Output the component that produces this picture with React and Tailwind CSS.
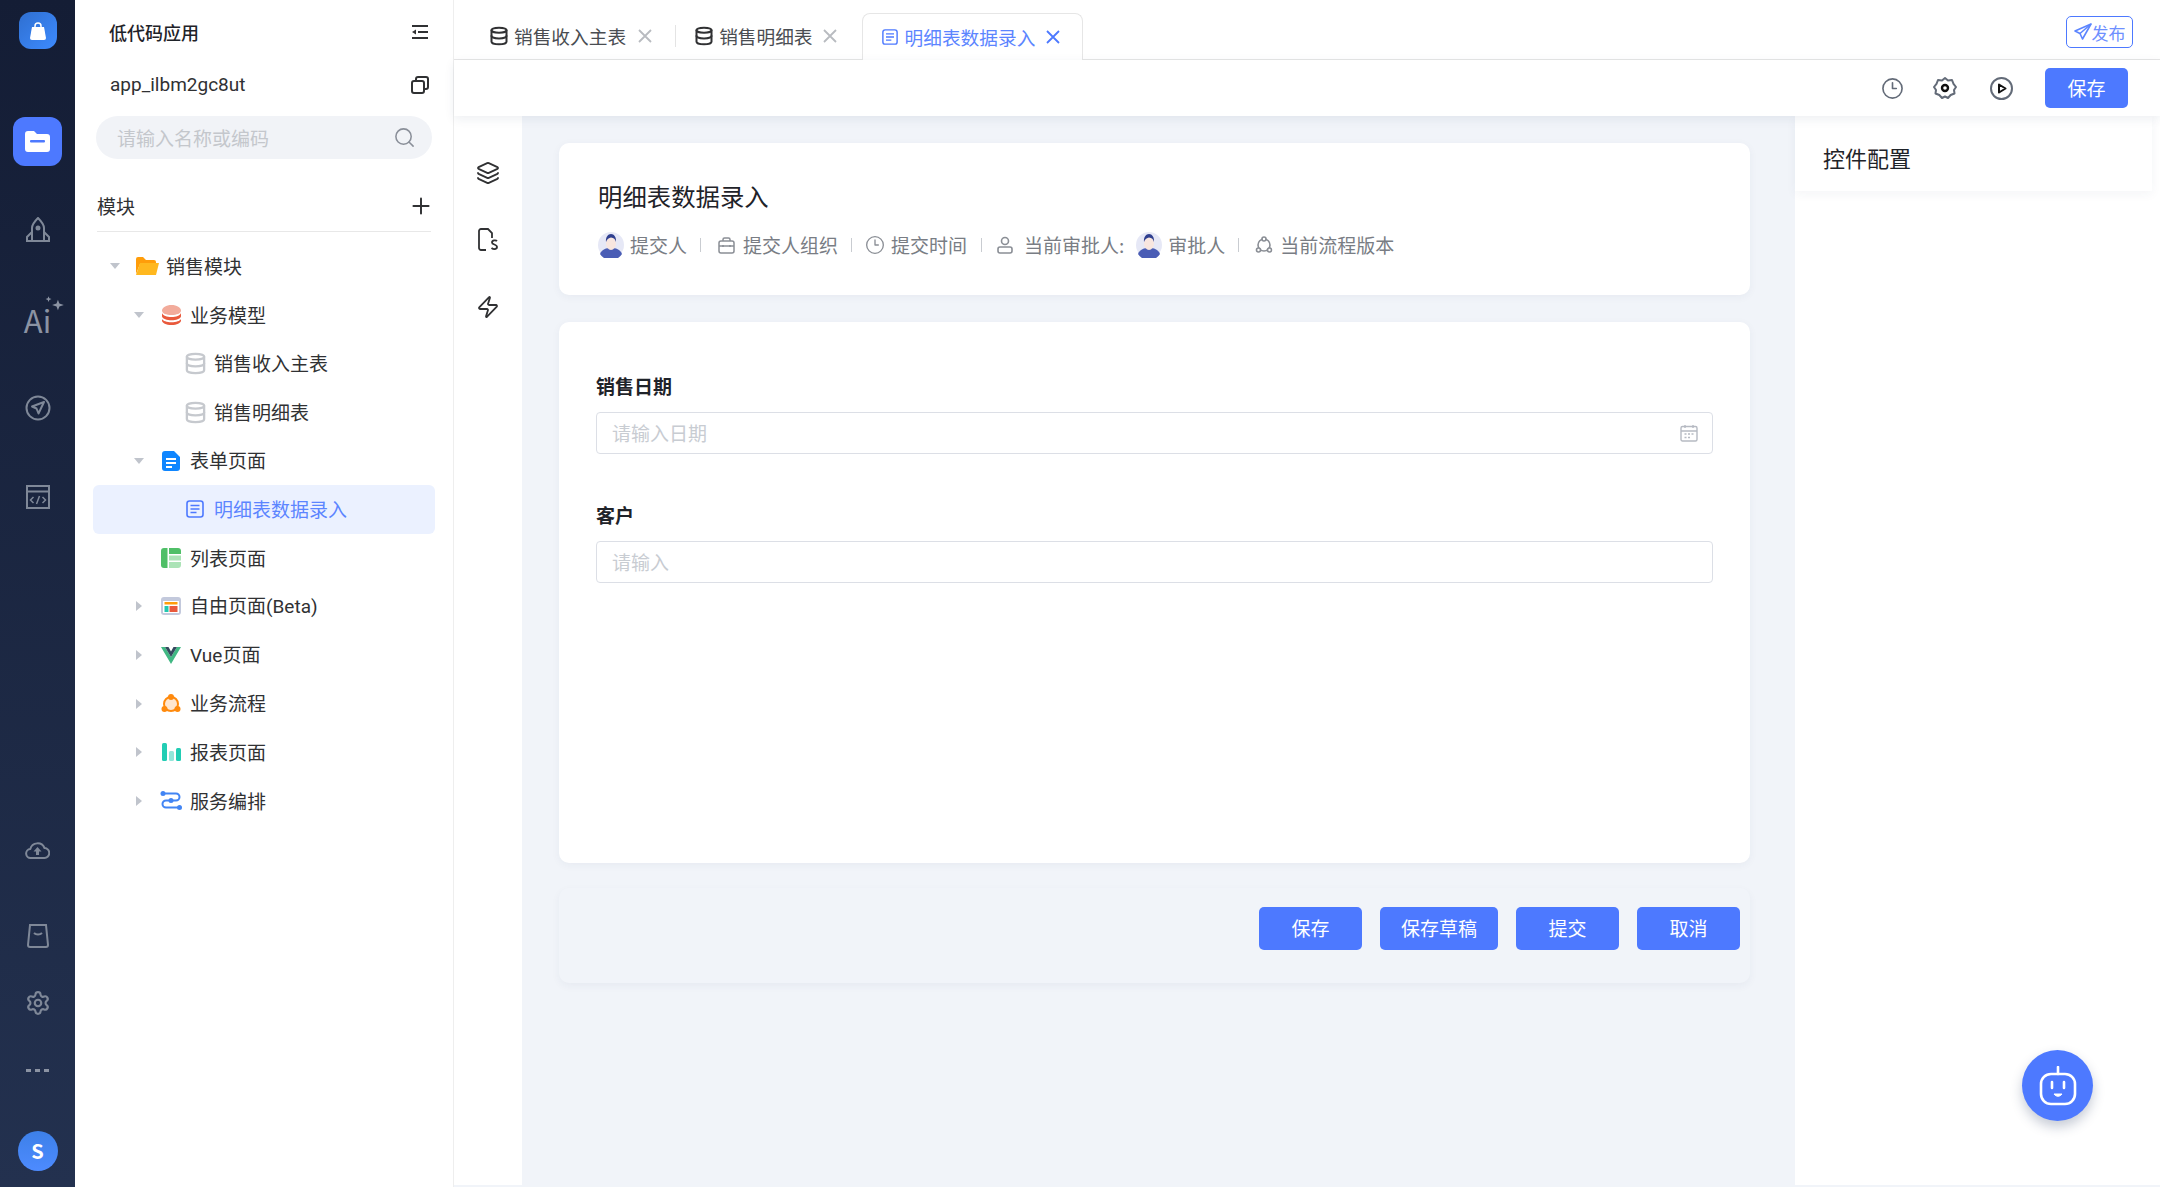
import React from "react";
import { Clock3, Database, Layers, Plus, Search, Settings, Zap } from "lucide-react";

const FONT = "font-['Noto_Sans_CJK_SC','Noto_Sans',sans-serif]";

const Caret = ({ dir }) => {
  if (dir === "down") {
    return (
      <svg width="14" height="10" viewBox="0 0 14 10">
        <path d="M2 2h10l-5 6z" fill="#c0c4cc" />
      </svg>
    );
  }
  if (dir === "right") {
    return (
      <svg width="10" height="14" viewBox="0 0 10 14">
        <path d="M2 2v10l6-5z" fill="#c0c4cc" />
      </svg>
    );
  }
  return null;
};

const DocOutline = ({ size = 18 }) => (
  <svg width={size} height={size} viewBox="0 0 18 18" fill="none" stroke="#4d79ff" strokeWidth="1.6">
    <rect x="1" y="1" width="16" height="16" rx="2.5" />
    <path d="M4.5 5.5h9M4.5 9h9M4.5 12.5h6" />
  </svg>
);

const FolderIcon = () => (
  <svg width="23" height="18" viewBox="0 0 23 18">
    <path d="M0 2a2 2 0 0 1 2-2h5l3 3h8a2 2 0 0 1 2 2v2H4L0 17z" fill="#ff9d0a" />
    <path d="M4 6h19l-3 12H0z" fill="#ffb81f" />
  </svg>
);

const ModelIcon = () => (
  <svg width="19" height="20" viewBox="0 0 19 20">
    <path d="M0 5.5C0 2.5 4.2 0 9.5 0S19 2.5 19 5.5 14.8 10 9.5 10 0 8.5 0 5.5z" fill="#f2ab9b" />
    <path d="M0 8c1 2.6 4.800 4 9.5 4S18 10.6 19 8v3.5c-1 2.5-4.800 3.800-9.500 3.800S1 14 0 11.500z" fill="#e9593c" />
    <path d="M0 14c1 2 4.800 3.200 9.500 3.200S18 16 19 14v1.500c0 2.500-4.200 4.500-9.500 4.500S0 18 0 15.500z" fill="#e9593c" />
  </svg>
);

const FormIcon = () => (
  <svg width="18" height="20" viewBox="0 0 18 20">
    <path d="M3 0h9l6 6v11a3 3 0 0 1-3 3H3a3 3 0 0 1-3-3V3a3 3 0 0 1 3-3z" fill="#0f86ff" />
    <path d="M4 7h10v2H4zM4 11h10v2H4zM4 15h6v2H4z" fill="#fff" />
  </svg>
);

const ListIcon = () => (
  <svg width="20" height="20" viewBox="0 0 20 20">
    <path d="M3 0h3.500v20H3a3 3 0 0 1-3-3V3a3 3 0 0 1 3-3z" fill="#4fbf67" />
    <path d="M8 0h9a3 3 0 0 1 3 3v3H8z" fill="#4fbf67" />
    <path d="M8 7.500h12v5H8zM8 14h12v3a3 3 0 0 1-3 3H8z" fill="#abe3b6" />
  </svg>
);

const FreeIcon = () => (
  <svg width="20" height="18" viewBox="0 0 20 18">
    <rect width="20" height="18" rx="3" fill="#c3c9dc" />
    <rect x="2" y="4" width="16" height="12" fill="#fff" />
    <rect x="3.500" y="5" width="13" height="2.500" fill="#ff9d0a" />
    <rect x="3.500" y="9" width="4" height="6" fill="#22c7b0" />
    <rect x="8.500" y="9" width="8" height="6" fill="#e9593c" />
  </svg>
);

const VueIcon = () => (
  <svg width="20" height="17" viewBox="0 0 20 17">
    <path d="M0 0h4l6 10 6-10h4L10 17z" fill="#41b883" />
    <path d="M4 0h3.500L10 4.500 12.500 0H16l-6 10z" fill="#35495e" />
  </svg>
);

const FlowIcon = () => (
  <svg width="20" height="20" viewBox="0 0 20 20">
    <circle cx="10" cy="10" r="7" fill="#ffe6cf" stroke="#ff8a0d" strokeWidth="2" />
    <circle cx="10" cy="3" r="3" fill="#ff8a0d" />
    <circle cx="3.500" cy="15" r="3" fill="#ff8a0d" />
    <circle cx="16.500" cy="15" r="3" fill="#ff8a0d" />
  </svg>
);

const ReportIcon = () => (
  <svg width="19" height="18" viewBox="0 0 19 18">
    <rect width="5" height="18" rx="1.500" fill="#22cdb4" />
    <rect x="7" y="8" width="5" height="10" rx="1.500" fill="#93e6d9" />
    <rect x="14" y="5" width="5" height="13" rx="1.500" fill="#22cdb4" />
  </svg>
);

const ServiceIcon = () => (
  <svg width="22" height="20" viewBox="0 0 22 20" fill="none" stroke="#4285f4" strokeWidth="2">
    <path d="M2 2.500h14a3.500 3.500 0 0 1 0 7H6a3.500 3.500 0 0 0 0 7h14" />
    <circle cx="3" cy="2.500" r="2.500" fill="#4285f4" stroke="none" />
    <circle cx="11" cy="9.500" r="2.500" fill="#4285f4" stroke="none" />
    <circle cx="19.500" cy="16.500" r="2.500" fill="#4285f4" stroke="none" />
  </svg>
);

const PersonAvatar = () => (
  <svg width="26" height="26" viewBox="0 0 26 26">
    <circle cx="13" cy="13" r="13" fill="#e6e8f6" />
    <path d="M2 22c2-5 6-6 11-6s9 1 11 6a13 13 0 0 1-22 0z" fill="#4a5db5" />
    <ellipse cx="13" cy="11" rx="5" ry="7" fill="#f8e6df" />
    <path d="M8 10c-.5-5 2-8 5-8s5.500 3 5 8c-1-3-2-4-5-4.500C11 6 9 7 8 10z" fill="#2f3f8f" />
  </svg>
);

const TableIcon = () => <Database size={23} color="#c6c9ce" strokeWidth={2.4} />;

const treeRows = [
  { level: 0, caret: "down", icon: <FolderIcon />, label: "销售模块" },
  { level: 1, caret: "down", icon: <ModelIcon />, label: "业务模型" },
  { level: 2, icon: <TableIcon />, label: "销售收入主表" },
  { level: 2, icon: <TableIcon />, label: "销售明细表" },
  { level: 1, caret: "down", icon: <FormIcon />, label: "表单页面" },
  { level: 2, icon: <DocOutline />, label: "明细表数据录入", active: true },
  { level: 1, icon: <ListIcon />, label: "列表页面" },
  { level: 1, caret: "right", icon: <FreeIcon />, label: "自由页面(Beta)", latin: true },
  { level: 1, caret: "right", icon: <VueIcon />, label: "Vue页面", latin: true },
  { level: 1, caret: "right", icon: <FlowIcon />, label: "业务流程" },
  { level: 1, caret: "right", icon: <ReportIcon />, label: "报表页面" },
  { level: 1, caret: "right", icon: <ServiceIcon />, label: "服务编排" },
];

const levelPadding = ["pl-[12px]", "pl-[36px]", "pl-[60px]"];

const railIcon = "#7f8898";

const Rail = () => (
  <aside className="flex h-full w-[75px] shrink-0 flex-col items-center bg-gradient-to-b from-[#141d35] to-[#23314f]">
    <div className="mt-[12px] flex h-[37px] w-[38px] items-center justify-center rounded-[12px] bg-gradient-to-br from-[#2f6fd0] to-[#3d8bff]">
      <svg width="16" height="18" viewBox="0 0 16 18">
        <path d="M2 5h12l2 11a2 2 0 0 1-2 2H2a2 2 0 0 1-2-2z" fill="#fff" />
        <path d="M5 6V4a3 3 0 0 1 6 0v2" fill="none" stroke="#fff" strokeWidth="1.500" />
      </svg>
    </div>
    <div className="mt-[48px] flex h-[88px] w-full items-center justify-center">
      <div className="flex h-[49px] w-[49px] items-center justify-center rounded-[12px] bg-[#4d79ff]">
        <svg width="25" height="21" viewBox="0 0 25 21">
          <path d="M0 3a3 3 0 0 1 3-3h6l3 3h10a3 3 0 0 1 3 3v12a3 3 0 0 1-3 3H3a3 3 0 0 1-3-3z" fill="#fff" />
          <rect x="5" y="9" width="15" height="2.500" rx="1" fill="#4d79ff" />
        </svg>
      </div>
    </div>
    <div className="flex h-[90px] items-center justify-center">
      <svg width="26" height="26" viewBox="0 0 26 26" fill="none" stroke={railIcon} strokeWidth="2">
        <path d="M7 24V11c0-4 3-7 6-10 3 3 6 6 6 10v13" />
        <path d="M7 15l-5 5v4h22v-4l-5-5M10 24h6" />
        <circle cx="13" cy="11" r="1.500" fill={railIcon} />
      </svg>
    </div>
    <div className="flex h-[89px] items-center justify-center">
      <span className="relative text-[31px] leading-none text-[#8b93a3]">
        Ai
        <svg width="20" height="18" viewBox="0 0 17 15" className="absolute -top-[8px] -right-[14px]" fill="#8b93a3">
          <path d="M11 3l1.200 3.300L16 7.500l-3.800 1.200L11 12 9.800 8.700 6 7.500l3.800-1.200z" />
          <path d="M3 0l.7 1.800L5.500 2.500l-1.800.7L3 5l-.7-1.800L.5 2.500l1.800-.7z" />
        </svg>
      </span>
    </div>
    <div className="flex h-[88px] items-center justify-center">
      <svg width="26" height="26" viewBox="0 0 26 26" fill="none" stroke={railIcon} strokeWidth="2">
        <circle cx="13" cy="13" r="11.500" />
        <path d="M19 7l-12 4.500 4.500 2 2 5z" strokeLinejoin="round" />
      </svg>
    </div>
    <div className="flex h-[89px] items-center justify-center">
      <svg width="24" height="24" viewBox="0 0 24 24" fill="none" stroke={railIcon} strokeWidth="2">
        <rect x="1" y="1" width="22" height="22" />
        <path d="M1 6.500h22" />
        <path d="M7.500 12l-3 3 3 3M16.500 12l3 3-3 3M13.500 11l-3 8" strokeWidth="1.500" />
      </svg>
    </div>
    <div className="mt-auto flex flex-col items-center pb-[16px]">
      <svg width="25" height="17" viewBox="0 0 25 17" fill="none" stroke={railIcon} strokeWidth="2" className="mb-[65px]">
        <path d="M6 16a4.500 4.500 0 0 1-.7-9A7.500 7.500 0 0 1 19.500 6 5 5 0 0 1 19 16z" strokeLinejoin="round" />
        <path d="M12.500 5l4 4.500h-2.500V13h-3V9.500H8.500z" fill={railIcon} stroke="none" />
      </svg>
      <svg width="22" height="24" viewBox="0 0 22 24" fill="none" stroke={railIcon} strokeWidth="2" className="mb-[42px]">
        <path d="M3 1h16l2 20a2 2 0 0 1-2 2H3a2 2 0 0 1-2-2z" />
        <path d="M7 9c2 2 6 2 8 0" />
      </svg>
      <Settings size={26} color={railIcon} className="mb-[53px]" />
      <div className="mb-[58px] flex h-[4px] gap-[4px]">
        <span className="h-[3px] w-[5px] bg-[#8b93a3]" />
        <span className="h-[3px] w-[5px] bg-[#8b93a3]" />
        <span className="h-[3px] w-[5px] bg-[#8b93a3]" />
      </div>
      <div className="flex h-[40px] w-[40px] items-center justify-center rounded-full bg-gradient-to-b from-[#3d80e8] to-[#4d8bff] text-[20px] font-bold text-white">
        S
      </div>
    </div>
  </aside>
);

const Sidebar = () => (
  <aside className="h-full w-[379px] shrink-0 border-r border-[#eeeeee] bg-white pt-[17px]">
    <div className="flex h-[30px] items-center justify-between pr-[24px] pl-[34px]">
      <span className="text-[18px] font-medium text-[#1f2329]">低代码应用</span>
      <svg width="18" height="14" viewBox="0 0 18 14" fill="none" stroke="#303133" strokeWidth="2">
        <path d="M1 1h16M7 7h10M1 13h16" />
        <path d="M5 4.500L1 7l4 2.500z" fill="#303133" stroke="none" />
      </svg>
    </div>
    <div className="mt-[23px] flex h-[30px] items-center justify-between pr-[24px] pl-[35px]">
      <span className="font-['Roboto',sans-serif] text-[19px] text-[#303133]">app_ilbm2gc8ut</span>
      <svg width="18" height="18" viewBox="0 0 18 18" fill="none" stroke="#303133" strokeWidth="2">
        <rect x="1" y="5" width="12" height="12" rx="2" />
        <path d="M5 5V3a2 2 0 0 1 2-2h8a2 2 0 0 1 2 2v8a2 2 0 0 1-2 2h-2" />
      </svg>
    </div>
    <div className="mt-[16px] ml-[21px] flex h-[43px] w-[336px] items-center justify-between rounded-full bg-[#f1f3f7] pr-[16px] pl-[21px]">
      <span className="pt-[2px] text-[19px] text-[#c4c7cc]">请输入名称或编码</span>
      <Search size={23} color="#8a8f99" strokeWidth={1.6} />
    </div>
    <div className="mt-[26px] ml-[22px] flex h-[47px] w-[334px] items-center justify-between border-b border-[#e8e8e8] pb-[4px]">
      <span className="text-[19px] text-[#303133]">模块</span>
      <Plus size={26} color="#303133" strokeWidth={1.8} className="mr-[-3px]" />
    </div>
    <div className="mt-[10px] ml-[18px] w-[342px]">
      {treeRows.map((row) => (
        <div
          key={row.label}
          className={`flex h-[48.600px] items-center rounded-[6px] ${levelPadding[row.level]} ${
            row.active ? "bg-[#ebf1ff] text-[#5c85ff]" : "text-[#303133]"
          }`}
        >
          <span className="mr-[10px] flex w-[20px] justify-center">
            <Caret dir={row.caret} />
          </span>
          <span className="mr-[7px] flex w-[24px] justify-center">{row.icon}</span>
          <span
            className={
              row.latin
                ? "pt-[2px] font-['Roboto','Noto_Sans_CJK_SC',sans-serif] text-[19px]"
                : "text-[19px]"
            }
          >
            {row.label}
          </span>
        </div>
      ))}
    </div>
  </aside>
);

const CloseX = ({ color }) => (
  <svg width="14" height="14" viewBox="0 0 14 14" fill="none" stroke={color} strokeWidth="1.800">
    <path d="M1 1l12 12M13 1L1 13" />
  </svg>
);

const TabBar = () => (
  <div className="flex h-[60px] items-end justify-between border-b border-[#e6e6e6] bg-white pl-[35px]">
    <div className="flex h-[47px] items-center">
      <span className="flex items-center pt-[2px]">
        <Database size={20} color="#303133" strokeWidth={2.400} />
        <span className="ml-[5px] text-[18.700px] text-[#4a4d52]">销售收入主表</span>
        <span className="ml-[12px]"><CloseX color="#b8bbc0" /></span>
      </span>
      <span className="mr-[18px] ml-[23px] h-[22px] w-px bg-[#e4e4e4]" />
      <span className="flex items-center pt-[2px]">
        <Database size={20} color="#303133" strokeWidth={2.400} />
        <span className="ml-[5px] text-[18.700px] text-[#4a4d52]">销售明细表</span>
        <span className="ml-[10px]"><CloseX color="#b8bbc0" /></span>
      </span>
      <div className="relative top-[1px] ml-[25px] flex h-[48px] w-[221px] items-center rounded-t-[8px] border border-b-0 border-[#e6e6e6] bg-white pl-[19px]">
        <DocOutline size={16} />
        <span className="ml-[7px] text-[18.700px] text-[#5c85ff]">明细表数据录入</span>
        <span className="ml-[11px]"><CloseX color="#4d79ff" /></span>
      </div>
    </div>
    <div className="mr-[27px] mb-[11px] flex h-[32px] w-[67px] items-center justify-center rounded-[5px] border border-[#4d79ff] text-[17px] text-[#6e8fff]">
      <svg width="18" height="18" viewBox="0 0 18 18" fill="none" stroke="#5c85ff" strokeWidth="1.600" strokeLinejoin="round">
        <path d="M17 1L1 8l5 2.500L8.500 16z" />
        <path d="M17 1L6 10.500" />
      </svg>
      <span className="leading-none">发布</span>
    </div>
  </div>
);

const ToolBar = () => (
  <div className="relative z-10 flex h-[56px] items-center justify-end bg-white pr-[32px] shadow-[0_3px_10px_rgba(30,50,90,0.08)]">
    <Clock3 size={23} color="#636b78" strokeWidth={1.700} />
    <svg width="24" height="24" viewBox="0 0 24 24" fill="none" className="ml-[29px]">
      <path
        d="M12 2l3 2.500 4-.5 1.500 3.800L23 11l-2 3 .5 3.500-3.800 1.500L15 22l-3-1.500L9 22l-2.700-3L2.500 17.500 3 14l-2-3 2.500-3.200L5 4l4 .5z"
        stroke="#636b78"
        strokeWidth="2"
        strokeLinejoin="round"
      />
      <circle cx="12" cy="12" r="3" stroke="#111" strokeWidth="2.400" />
    </svg>
    <svg width="23" height="23" viewBox="0 0 23 23" fill="none" stroke="#636b78" strokeWidth="2" className="ml-[33px]">
      <circle cx="11.500" cy="11.500" r="10.500" />
      <path d="M9 7.500l6.500 4-6.500 4z" stroke="#111" strokeLinejoin="round" />
    </svg>
    <button className="ml-[32px] h-[40px] w-[83px] rounded-[5px] bg-[#4d79ff] text-[19px] text-white">保存</button>
  </div>
);

const MetaSep = () => <span className="mx-[13px] h-[14px] w-px bg-[#c9ccd1]" />;

const Meta = () => (
  <div className="mt-[17px] flex h-[28px] items-center text-[19px] text-[#797d84]">
    <PersonAvatar />
    <span className="ml-[6px]">提交人</span>
    <MetaSep />
    <svg width="17" height="17" viewBox="0 0 17 17" fill="none" stroke="#8a8e95" strokeWidth="1.500" className="ml-[4px]">
      <rect x="1" y="4" width="15" height="12" rx="2" />
      <path d="M5 4V2.500A1.500 1.500 0 0 1 6.500 1h4A1.500 1.500 0 0 1 12 2.500V4M1 9h15M5 8v2M12 8v2" />
    </svg>
    <span className="ml-[8px]">提交人组织</span>
    <MetaSep />
    <Clock3 size={20} color="#8a8e95" strokeWidth={1.600} />
    <span className="ml-[6px]">提交时间</span>
    <span className="mr-[12px] ml-[14px] h-[14px] w-px bg-[#c9ccd1]" />
    <svg width="16" height="18" viewBox="0 0 16 18" fill="none" stroke="#8a8e95" strokeWidth="1.600" className="ml-[3px]">
      <circle cx="8" cy="5" r="3.500" />
      <rect x="1" y="11" width="14" height="6" rx="2" />
    </svg>
    <span className="ml-[11px]">当前审批人:</span>
    <span className="ml-[12px]"><PersonAvatar /></span>
    <span className="ml-[6px]">审批人</span>
    <MetaSep />
    <svg width="18" height="18" viewBox="0 0 18 18" fill="none" stroke="#8a8e95" strokeWidth="1.600" className="ml-[3px]">
      <circle cx="9" cy="9" r="6" />
      <circle cx="9" cy="3" r="2" fill="#fff" />
      <circle cx="3.500" cy="14" r="2" fill="#fff" />
      <circle cx="14.500" cy="14" r="2" fill="#fff" />
    </svg>
    <span className="ml-[7px]">当前流程版本</span>
  </div>
);

const Field = ({ label, placeholder, icon }) => (
  <div>
    <div className="mb-[13px] text-[19px] leading-[26px] font-bold text-[#1f2329]">{label}</div>
    <div className="flex h-[42px] items-center justify-between rounded-[4px] border border-[#dcdfe6] pr-[14px] pl-[15px]">
      <span className="text-[19px] text-[#c8ccd2]">{placeholder}</span>
      {icon}
    </div>
  </div>
);

const Canvas = () => (
  <div className="flex h-full min-w-0 flex-1 flex-col bg-[#f1f4f9] pt-[27px] pr-[45px] pl-[37px]">
    <section className="h-[152px] rounded-[10px] bg-white pt-[35px] pl-[39px] shadow-[0_2px_8px_rgba(30,50,90,0.05)]">
      <h2 className="text-[24.400px] leading-[36px] font-normal text-[#1f2329]">明细表数据录入</h2>
      <Meta />
    </section>
    <section className="mt-[27px] h-[541px] rounded-[10px] bg-white px-[37px] pt-[51px] shadow-[0_2px_8px_rgba(30,50,90,0.05)]">
      <Field
        label="销售日期"
        placeholder="请输入日期"
        icon={
          <svg width="18" height="18" viewBox="0 0 18 18" fill="none" stroke="#b6bac2" strokeWidth="1.400">
            <rect x="1" y="2.500" width="16" height="14.500" rx="1.500" />
            <path d="M1 7h16M5 1v3M13 1v3M4.500 10h2M8 10h2M11.500 10h2M4.500 13.500h2M8 13.500h2" />
          </svg>
        }
      />
      <div className="mt-[48px]">
        <Field label="客户" placeholder="请输入" />
      </div>
    </section>
    <section className="mt-[25px] flex h-[95px] justify-end gap-[18px] rounded-[10px] bg-[#f1f4f9] pt-[19px] pr-[10px] text-[19px] text-white shadow-[0_3px_8px_rgba(30,50,90,0.05)]">
      <button className="h-[43px] w-[103px] rounded-[5px] bg-[#4d79ff]">保存</button>
      <button className="h-[43px] w-[118px] rounded-[5px] bg-[#4d79ff]">保存草稿</button>
      <button className="h-[43px] w-[103px] rounded-[5px] bg-[#4d79ff]">提交</button>
      <button className="h-[43px] w-[103px] rounded-[5px] bg-[#4d79ff]">取消</button>
    </section>
  </div>
);

const ConfigPanel = () => (
  <aside className="h-full w-[365px] shrink-0 bg-white">
    <div className="flex h-[75px] w-[357px] items-center pt-[8px] pl-[28px] text-[22px] text-[#1f2329] shadow-[0_3px_10px_rgba(30,50,90,0.05)]">
      控件配置
    </div>
  </aside>
);

const App = () => (
  <div className={`relative flex h-[1187px] w-[2160px] overflow-hidden bg-white ${FONT}`}>
    <Rail />
    <Sidebar />
    <main className="flex h-full min-w-0 flex-1 flex-col bg-[#f1f4f9]">
      <TabBar />
      <ToolBar />
      <div className="flex h-[1069px]">
        <div className="flex h-full w-[68px] shrink-0 flex-col items-center bg-white pt-[45px]">
          <Layers size={24} color="#303133" strokeWidth={1.800} />
          <svg width="22" height="24" viewBox="0 0 22 24" fill="none" stroke="#303133" strokeWidth="1.800" className="mt-[43px]">
            <path d="M9 22H4a2 2 0 0 1-2-2V3a2 2 0 0 1 2-2h7l4 4v5" />
            <path d="M20 13c-1-1-5-1-5 1.500 0 2.500 5 1.500 5 4.500 0 2.500-3.500 2.500-5.500 1" />
          </svg>
          <Zap size={24} color="#303133" strokeWidth={1.800} className="mt-[43px]" />
        </div>
        <Canvas />
        <ConfigPanel />
      </div>
    </main>
    <button className="absolute top-[1050px] left-[2022px] flex h-[71px] w-[71px] items-center justify-center rounded-full bg-[#4d79ff] shadow-[0_6px_12px_rgba(30,50,90,0.25)]">
      <svg width="40" height="40" viewBox="0 0 40 40" fill="none" stroke="#fff" strokeWidth="2.600">
        <rect x="3" y="8" width="34" height="30" rx="10" />
        <path d="M20 1v7" strokeLinecap="round" />
        <path d="M14 16v6M26 16v6" strokeLinecap="round" />
        <path d="M16 28c2 3 6 3 8 0z" fill="#fff" strokeWidth="1" />
      </svg>
    </button>
  </div>
);

export default App;
